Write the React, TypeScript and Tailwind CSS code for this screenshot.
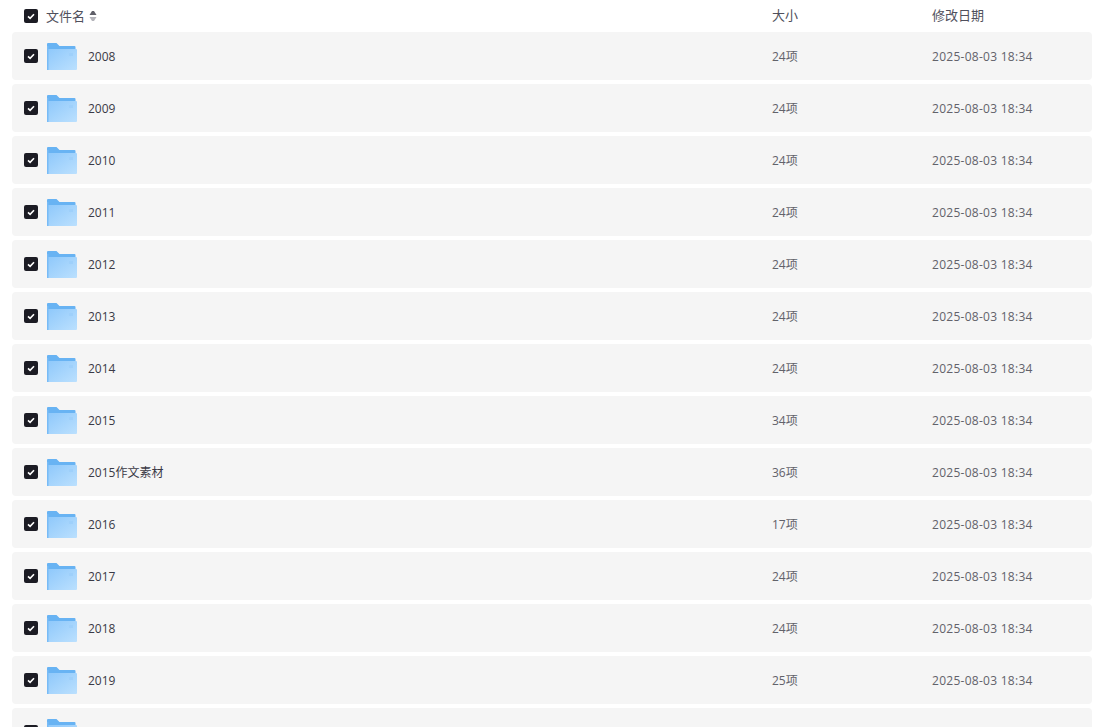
const rows: [string, string][] = [
  ["2008", "24项"],
  ["2009", "24项"],
  ["2010", "24项"],
  ["2011", "24项"],
  ["2012", "24项"],
  ["2013", "24项"],
  ["2014", "24项"],
  ["2015", "34项"],
  ["2015作文素材", "36项"],
  ["2016", "17项"],
  ["2017", "24项"],
  ["2018", "24项"],
  ["2019", "25项"],
  ["2020", "24项"],
];

function Check() {
  return (
    <span className="flex h-[14px] w-[14px] shrink-0 items-center justify-center rounded-[2px] bg-[#1c1c24]">
      <svg width="8" height="7" viewBox="0 0 8 7" fill="none">
        <path d="M1 3.4 L3.1 5.4 L7 1.3" stroke="#ffffff" strokeWidth="1.6" />
      </svg>
    </span>
  );
}

function Folder() {
  return (
    <svg width="30" height="27" viewBox="0 0 30 27" className="shrink-0">
      <defs>
        <linearGradient id="fg" x1="0" y1="0" x2="1" y2="1">
          <stop offset="0" stopColor="#8ec8fb" />
          <stop offset="1" stopColor="#bbe0fe" />
        </linearGradient>
      </defs>
      <path d="M0 1 Q0 0 1 0 H9.5 L12.5 3 H27.5 Q28.5 3 28.5 4 V8 H0 Z" fill="#68b3f3" />
      <path d="M1 6 H29 Q30 6 30 7 V26 Q30 27 29 27 H1 Q0 27 0 26 Z" fill="url(#fg)" />
      <rect x="0" y="3" width="1.5" height="24" fill="#78bbf6" />
      <rect x="22" y="10" width="4" height="3" fill="#9ed0fb" />
    </svg>
  );
}

export default function App() {
  return (
    <div className="h-[727px] overflow-hidden bg-white pl-3 pr-[10px] font-['Open_Sans','Noto_Sans_CJK_SC',sans-serif] text-xs text-[#3f3f4a]">
      <div className="flex h-8 items-center pl-3 text-[13px] text-[#50505c]">
        <Check />
        <span className="ml-2 font-['Noto_Sans_CJK_SC',sans-serif]">文件名</span>
        <svg width="8" height="12" viewBox="0 0 8 12" className="ml-1">
          <path d="M3 1 H5 L7.5 5 H0.5 Z" fill="#5f5f68" />
          <path d="M3 11 H5 L7.5 7 H0.5 Z" fill="#b4b4ba" />
        </svg>
        <span className="ml-[675px] w-40 -translate-y-px font-['Noto_Sans_CJK_SC',sans-serif]">大小</span>
        <span className="-translate-y-px font-['Noto_Sans_CJK_SC',sans-serif]">修改日期</span>
      </div>
      <div className="flex flex-col gap-1">
        {rows.map(([name, size]) => (
          <div key={name} className="flex h-12 shrink-0 items-center rounded-[4px] bg-[#f5f5f5] pl-3">
            <Check />
            <span className="ml-[9px] mr-[11px] mt-px flex"><Folder /></span>
            <span className="w-[684px] pt-[2px] text-[#3a3a46]">{name}</span>
            <span className="w-40 pt-[2px] text-[#62626a]">{size}</span>
            <span className="pt-[2px] tracking-[0.27px] text-[#62626a]">2025-08-03 18:34</span>
          </div>
        ))}
      </div>
    </div>
  );
}
